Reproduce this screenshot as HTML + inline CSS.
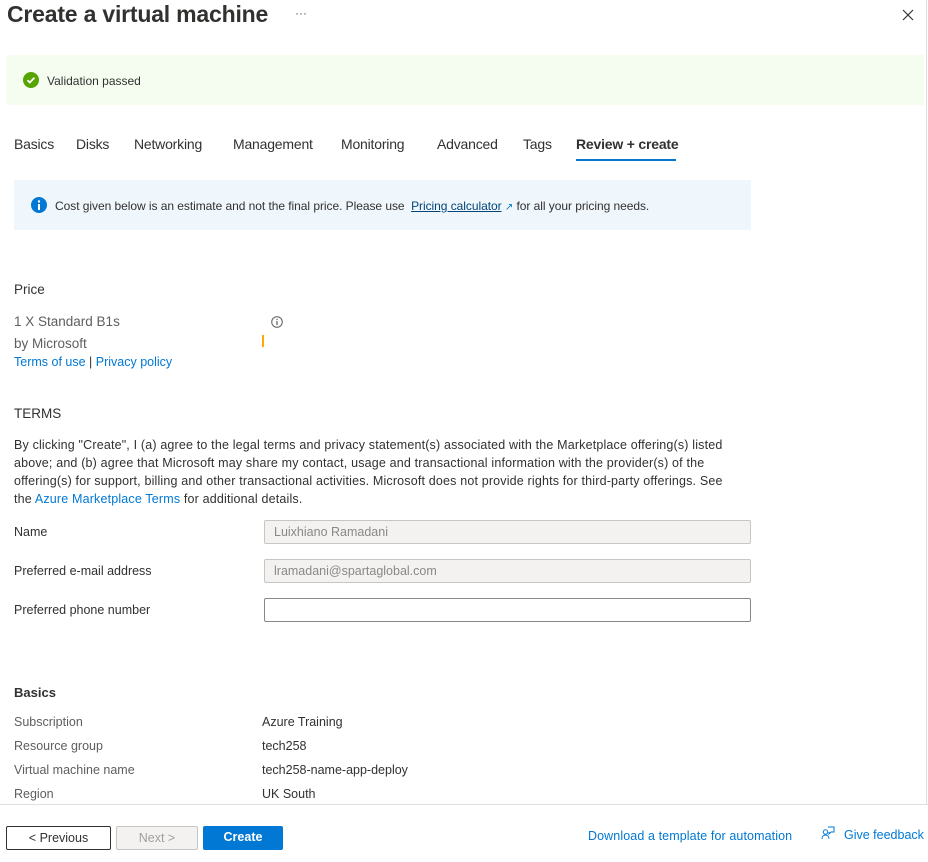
<!DOCTYPE html>
<html><head><style>
*{margin:0;padding:0;box-sizing:border-box}
body{width:928px;height:862px;overflow:hidden;background:#fff;font-family:"Liberation Sans",sans-serif;color:#323130;position:relative;font-size:13px}
.a{position:absolute;white-space:nowrap}
.tab{position:absolute;top:136px;font-size:14px;color:#323130;letter-spacing:-0.2px}
.lbl{position:absolute;left:14px;font-size:12.5px;color:#323130}
.g{color:#605e5c}
.lk{color:#0078d4}
.inp{position:absolute;left:264px;width:487px;height:24px;border:1px solid #8a8886;border-radius:2px;font-size:12.5px;padding:4px 9px;color:#8a8886}
.dis{background:#f3f2f1;border-color:#c8c6c4}
.btn{position:absolute;top:826px;height:24px;font-size:12.5px;text-align:center;line-height:22px;border-radius:2px}
</style></head><body>
<div class="a" style="left:7px;top:1px;font-size:23px;font-weight:600;color:#323130;letter-spacing:-0.2px">Create a virtual machine</div>
<div class="a" style="left:295px;top:6px;font-size:12px;color:#605e5c">···</div>
<svg class="a" style="left:902px;top:9px" width="12" height="12" viewBox="0 0 12 12"><path d="M1 1L11 11M11 1L1 11" stroke="#323130" stroke-width="1.2"/></svg>
<div class="a" style="left:6px;top:55px;width:918px;height:50px;background:#f5fdf0"></div>
<svg class="a" style="left:23px;top:72px" width="16" height="16" viewBox="0 0 16 16"><circle cx="8" cy="8" r="8" fill="#57a300"/><path d="M4.5 8.2l2.3 2.3 4.6-4.8" stroke="#fff" stroke-width="1.8" fill="none"/></svg>
<div class="a" style="left:47px;top:74px;font-size:12px">Validation passed</div>
<div class="tab" style="left:14px">Basics</div>
<div class="tab" style="left:76px">Disks</div>
<div class="tab" style="left:134px">Networking</div>
<div class="tab" style="left:233px">Management</div>
<div class="tab" style="left:341px">Monitoring</div>
<div class="tab" style="left:437px">Advanced</div>
<div class="tab" style="left:523px">Tags</div>
<div class="tab" style="left:576px;font-weight:600">Review + create</div>
<div class="a" style="left:576px;top:159px;width:100px;height:2px;background:#0078d4"></div>
<div class="a" style="left:14px;top:180px;width:737px;height:50px;background:#eff6fc"></div>
<svg class="a" style="left:31px;top:197px" width="16" height="16" viewBox="0 0 16 16"><circle cx="8" cy="8" r="8" fill="#0078d4"/><rect x="7" y="7" width="2" height="6" fill="#fff"/><circle cx="8" cy="4.5" r="1.2" fill="#fff"/></svg>
<div class="a" style="left:55px;top:199px;font-size:12px;letter-spacing:-0.05px">Cost given below is an estimate and not the final price. Please use&nbsp; <span style="text-decoration:underline;color:#004578">Pricing calculator</span> <span style="color:#0078d4;font-size:10px">↗</span> for all your pricing needs.</div>
<div class="a" style="left:14px;top:282px;font-size:13.5px">Price</div>
<div class="a g" style="left:14px;top:314px;font-size:13.5px">1 X Standard B1s</div>
<svg class="a" style="left:271px;top:316px" width="12" height="12" viewBox="0 0 12 12"><circle cx="6" cy="6" r="5.3" fill="none" stroke="#605e5c"/><rect x="5.4" y="5" width="1.2" height="4" fill="#605e5c"/><circle cx="6" cy="3.4" r=".7" fill="#605e5c"/></svg>
<div class="a" style="left:262px;top:335px;width:2px;height:12px;background:#ffaa00"></div>
<div class="a g" style="left:14px;top:336px;font-size:13.5px">by Microsoft</div>
<div class="a" style="left:14px;top:355px;font-size:12.5px"><span class="lk">Terms of use</span> | <span class="lk">Privacy policy</span></div>
<div class="a" style="left:14px;top:406px;font-size:13.5px">TERMS</div>
<div class="a" style="left:14px;top:436px;font-size:12.5px;line-height:18px;letter-spacing:0.17px">By clicking "Create", I (a) agree to the legal terms and privacy statement(s) associated with the Marketplace offering(s) listed<br>above; and (b) agree that Microsoft may share my contact, usage and transactional information with the provider(s) of the<br>offering(s) for support, billing and other transactional activities. Microsoft does not provide rights for third-party offerings. See<br>the <span class="lk">Azure Marketplace Terms</span> for additional details.</div>
<div class="lbl" style="top:525px">Name</div>
<div class="inp dis" style="top:520px">Luixhiano Ramadani</div>
<div class="lbl" style="top:564px">Preferred e-mail address</div>
<div class="inp dis" style="top:559px">lramadani@spartaglobal.com</div>
<div class="lbl" style="top:603px">Preferred phone number</div>
<div class="inp" style="top:598px"></div>
<div class="a" style="left:14px;top:685px;font-size:13px;font-weight:600">Basics</div>
<div class="lbl g" style="top:715px">Subscription</div><div class="a" style="left:262px;top:715px;font-size:12.5px">Azure Training</div>
<div class="lbl g" style="top:739px">Resource group</div><div class="a" style="left:262px;top:739px;font-size:12.5px">tech258</div>
<div class="lbl g" style="top:763px">Virtual machine name</div><div class="a" style="left:262px;top:763px;font-size:12.5px">tech258-name-app-deploy</div>
<div class="lbl g" style="top:787px">Region</div><div class="a" style="left:262px;top:787px;font-size:12.5px">UK South</div>
<div class="a" style="left:926px;top:0;width:1px;height:805px;background:#e1dfdd"></div>
<div class="a" style="left:0;top:804px;width:928px;height:58px;background:#fff;border-top:1px solid #e1dfdd"></div>
<div class="btn" style="left:6px;width:105px;border:1px solid #323130">&lt; Previous</div>
<div class="btn" style="left:116px;width:82px;border:1px solid #c8c6c4;background:#f3f2f1;color:#a19f9d">Next &gt;</div>
<div class="btn" style="left:203px;width:80px;background:#0078d4;color:#fff;font-weight:600">Create</div>
<div class="a lk" style="left:588px;top:829px;font-size:12.5px;letter-spacing:0.1px">Download a template for automation</div>
<svg class="a" style="left:821px;top:826px" width="14" height="14" viewBox="0 0 14 14" fill="none" stroke="#0078d4" stroke-width="1"><circle cx="4.5" cy="6" r="2.2"/><path d="M1 13c0-2.5 1.5-4 3.5-4s3.5 1.5 3.5 4"/><path d="M7 1h6v5h-3l-2 2V6"/></svg>
<div class="a lk" style="left:844px;top:828px;font-size:12.5px">Give feedback</div>
</body></html>
